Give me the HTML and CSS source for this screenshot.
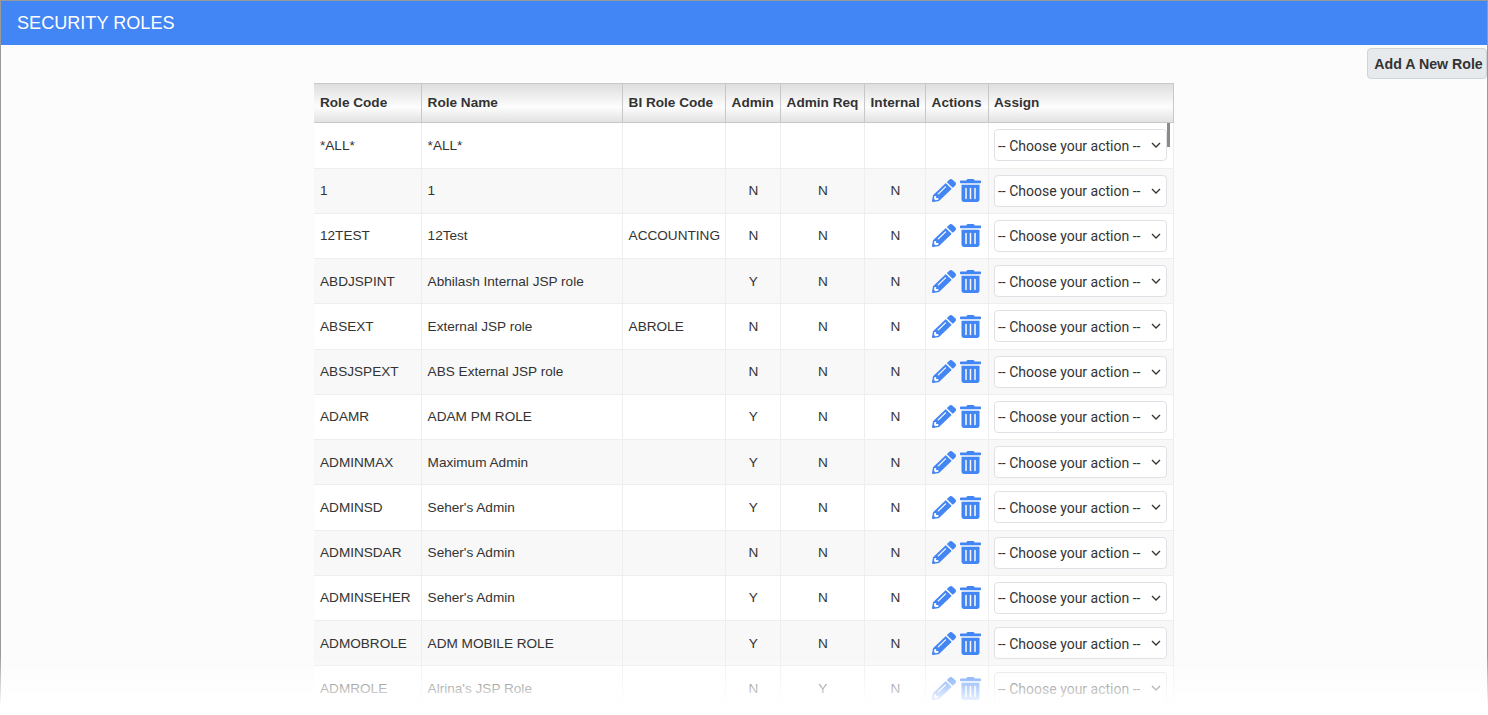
FILE: index.html
```html
<!DOCTYPE html>
<html lang="en">
<head>
    <meta charset="UTF-8">
    <title>Security Roles</title>
    <link rel="stylesheet" href="styles.css">
</head>
<body>
    <svg class="icon-defs" width="0" height="0">
        <symbol id="pencil" viewBox="0 0 512 512" preserveAspectRatio="none">
            <path d="M497.900 142.100l-46.100 46.100c-4.700 4.700-12.300 4.700-17 0l-111-111c-4.700-4.700-4.700-12.300 0-17l46.100-46.100c18.700-18.700 49.100-18.700 67.900 0l60.100 60.100c18.800 18.700 18.800 49.100 0 67.900zM284.200 99.800L21.600 362.400.4 483.900c-2.900 16.400 11.400 30.600 27.800 27.800l121.500-21.300 262.600-262.600c4.700-4.700 4.700-12.300 0-17l-111-111c-4.800-4.700-12.400-4.700-17.100 0zM124.100 339.900c-5.500-5.500-5.500-14.300 0-19.800l154-154c5.500-5.500 14.300-5.500 19.800 0s5.500 14.300 0 19.800l-154 154c-5.500 5.500-14.300 5.500-19.800 0zM88 424h48v36.300l-64.500 11.300-31.100-31.100L51.700 376H88v48z"/>
        </symbol>
        <symbol id="trash" viewBox="0 0 448 512" preserveAspectRatio="none">
            <path d="M32 464a48 48 0 0 0 48 48h288a48 48 0 0 0 48-48V128H32zm272-256a16 16 0 0 1 32 0v224a16 16 0 0 1-32 0zm-96 0a16 16 0 0 1 32 0v224a16 16 0 0 1-32 0zm-96 0a16 16 0 0 1 32 0v224a16 16 0 0 1-32 0zM432 32H312l-9.400-18.700A24 24 0 0 0 281.100 0H166.800a23.720 23.720 0 0 0-21.400 13.300L136 32H16A16 16 0 0 0 0 48v32a16 16 0 0 0 16 16h416a16 16 0 0 0 16-16V48a16 16 0 0 0-16-16z"/>
        </symbol>
    </svg>

    <div class="page">
        <div class="title-bar">SECURITY ROLES</div>
        <div class="toolbar">
            <button type="button" class="btn-add">Add A New Role</button>
        </div>

        <div class="table-wrap">
            <span class="scroll-thumb"></span>
            <table class="roles">
                <colgroup>
                    <col class="c-code"><col class="c-name"><col class="c-bi"><col class="c-admin">
                    <col class="c-req"><col class="c-int"><col class="c-act"><col class="c-assign">
                </colgroup>
                <thead>
                    <tr>
                        <th>Role Code</th>
                        <th>Role Name</th>
                        <th>BI Role Code</th>
                        <th>Admin</th>
                        <th>Admin Req</th>
                        <th>Internal</th>
                        <th>Actions</th>
                        <th>Assign</th>
                    </tr>
                </thead>
                <tbody>
                    <tr>
                        <td>*ALL*</td><td>*ALL*</td><td></td><td></td><td></td><td></td><td></td>
                        <td><select><option>-- Choose your action --</option></select></td>
                    </tr>
                    <tr>
                        <td>1</td><td>1</td><td></td><td class="mid">N</td><td class="mid">N</td><td class="mid">N</td>
                        <td class="actions"><svg class="ic-pencil"><use href="#pencil"/></svg><svg class="ic-trash"><use href="#trash"/></svg></td>
                        <td><select><option>-- Choose your action --</option></select></td>
                    </tr>
                    <tr>
                        <td>12TEST</td><td>12Test</td><td>ACCOUNTING</td><td class="mid">N</td><td class="mid">N</td><td class="mid">N</td>
                        <td class="actions"><svg class="ic-pencil"><use href="#pencil"/></svg><svg class="ic-trash"><use href="#trash"/></svg></td>
                        <td><select><option>-- Choose your action --</option></select></td>
                    </tr>
                    <tr>
                        <td>ABDJSPINT</td><td>Abhilash Internal JSP role</td><td></td><td class="mid">Y</td><td class="mid">N</td><td class="mid">N</td>
                        <td class="actions"><svg class="ic-pencil"><use href="#pencil"/></svg><svg class="ic-trash"><use href="#trash"/></svg></td>
                        <td><select><option>-- Choose your action --</option></select></td>
                    </tr>
                    <tr>
                        <td>ABSEXT</td><td>External JSP role</td><td>ABROLE</td><td class="mid">N</td><td class="mid">N</td><td class="mid">N</td>
                        <td class="actions"><svg class="ic-pencil"><use href="#pencil"/></svg><svg class="ic-trash"><use href="#trash"/></svg></td>
                        <td><select><option>-- Choose your action --</option></select></td>
                    </tr>
                    <tr>
                        <td>ABSJSPEXT</td><td>ABS External JSP role</td><td></td><td class="mid">N</td><td class="mid">N</td><td class="mid">N</td>
                        <td class="actions"><svg class="ic-pencil"><use href="#pencil"/></svg><svg class="ic-trash"><use href="#trash"/></svg></td>
                        <td><select><option>-- Choose your action --</option></select></td>
                    </tr>
                    <tr>
                        <td>ADAMR</td><td>ADAM PM ROLE</td><td></td><td class="mid">Y</td><td class="mid">N</td><td class="mid">N</td>
                        <td class="actions"><svg class="ic-pencil"><use href="#pencil"/></svg><svg class="ic-trash"><use href="#trash"/></svg></td>
                        <td><select><option>-- Choose your action --</option></select></td>
                    </tr>
                    <tr>
                        <td>ADMINMAX</td><td>Maximum Admin</td><td></td><td class="mid">Y</td><td class="mid">N</td><td class="mid">N</td>
                        <td class="actions"><svg class="ic-pencil"><use href="#pencil"/></svg><svg class="ic-trash"><use href="#trash"/></svg></td>
                        <td><select><option>-- Choose your action --</option></select></td>
                    </tr>
                    <tr>
                        <td>ADMINSD</td><td>Seher's Admin</td><td></td><td class="mid">Y</td><td class="mid">N</td><td class="mid">N</td>
                        <td class="actions"><svg class="ic-pencil"><use href="#pencil"/></svg><svg class="ic-trash"><use href="#trash"/></svg></td>
                        <td><select><option>-- Choose your action --</option></select></td>
                    </tr>
                    <tr>
                        <td>ADMINSDAR</td><td>Seher's Admin</td><td></td><td class="mid">N</td><td class="mid">N</td><td class="mid">N</td>
                        <td class="actions"><svg class="ic-pencil"><use href="#pencil"/></svg><svg class="ic-trash"><use href="#trash"/></svg></td>
                        <td><select><option>-- Choose your action --</option></select></td>
                    </tr>
                    <tr>
                        <td>ADMINSEHER</td><td>Seher's Admin</td><td></td><td class="mid">Y</td><td class="mid">N</td><td class="mid">N</td>
                        <td class="actions"><svg class="ic-pencil"><use href="#pencil"/></svg><svg class="ic-trash"><use href="#trash"/></svg></td>
                        <td><select><option>-- Choose your action --</option></select></td>
                    </tr>
                    <tr>
                        <td>ADMOBROLE</td><td>ADM MOBILE ROLE</td><td></td><td class="mid">Y</td><td class="mid">N</td><td class="mid">N</td>
                        <td class="actions"><svg class="ic-pencil"><use href="#pencil"/></svg><svg class="ic-trash"><use href="#trash"/></svg></td>
                        <td><select><option>-- Choose your action --</option></select></td>
                    </tr>
                    <tr>
                        <td>ADMROLE</td><td>Alrina's JSP Role</td><td></td><td class="mid">N</td><td class="mid">Y</td><td class="mid">N</td>
                        <td class="actions"><svg class="ic-pencil"><use href="#pencil"/></svg><svg class="ic-trash"><use href="#trash"/></svg></td>
                        <td><select><option>-- Choose your action --</option></select></td>
                    </tr>
                </tbody>
            </table>
        </div>
    </div>

    <div class="fade"></div>
</body>
</html>
```

FILE: styles.css
```css
* {
    box-sizing: border-box;
}

html,
body {
    margin: 0;
    height: 100%;
    overflow: hidden;
}

body {
    font-family: "Liberation Sans", Arial, sans-serif;
    font-size: 13.6px;
    color: #333;
    background-color: #fcfcfc;
}

.icon-defs {
    position: absolute;
}

.page {
    height: 715px;
    border: 1px solid #999;
    border-bottom: none;
    overflow: hidden;
}

.title-bar {
    height: 44px;
    padding-left: 16px;
    line-height: 44px;
    font-size: 18.1px;
    color: #fff;
    background-color: #4285f4;
}

.toolbar {
    display: flex;
    justify-content: flex-end;
    height: 38px;
    padding-top: 3px;
}

.btn-add {
    width: 120px;
    height: 31px;
    padding: 0 0 0 3px;
    font-family: "Liberation Sans", Arial, sans-serif;
    font-size: 14.2px;
    font-weight: bold;
    color: #333;
    background-color: #e7eaed;
    border: 1px solid #ced4da;
    border-radius: 4px;
}

.table-wrap {
    position: relative;
    width: 860px;
    margin: 0 auto;
}

.scroll-thumb {
    position: absolute;
    left: 853px;
    top: 40px;
    width: 3px;
    height: 24px;
    background-color: #8a8a8a;
}

.roles {
    width: 860px;
    table-layout: fixed;
    border-collapse: separate;
    border-spacing: 0;
}

.c-code { width: 108px; }
.c-name { width: 201px; }
.c-bi { width: 103px; }
.c-admin { width: 55px; }
.c-req { width: 84px; }
.c-int { width: 61px; }
.c-act { width: 63px; }
.c-assign { width: 185px; }

.roles th {
    height: 40.3px;
    padding: 0 5px 2px 5.6px;
    text-align: left;
    font-weight: bold;
    white-space: nowrap;
    border-top: 1px solid #c8c8c8;
    border-bottom: 1px solid #c8c8c8;
    border-right: 1px solid #c8c8c8;
    background: linear-gradient(#dedede, #fdfdfd 60%, #e2e2e2);
}

.roles td {
    height: 45.25px;
    padding: 0 5px 0 5.6px;
    white-space: nowrap;
    border-bottom: 1px solid #eee;
    border-right: 1px solid #eee;
}

.roles th:first-child,
.roles td:first-child {
    padding-left: 6px;
}

.roles th:last-child,
.roles td:last-child {
    padding-left: 5px;
}

.roles tbody tr:nth-child(odd) {
    background-color: #fff;
}

.roles tbody tr:nth-child(even) {
    background-color: #f8f8f8;
}

.roles td.mid {
    text-align: center;
}

.roles td.actions {
    padding: 0 0 0 6px;
    font-size: 0;
}

.ic-pencil,
.ic-trash {
    vertical-align: middle;
    fill: #4285f4;
}

.ic-pencil {
    width: 24px;
    height: 23px;
}

.ic-trash {
    width: 21px;
    height: 23px;
    margin-left: 4px;
}

.roles select {
    appearance: none;
    width: 173px;
    height: 32px;
    padding: 1px 3px 0;
    font-family: Roboto, sans-serif;
    font-size: 14px;
    color: #333;
    background-color: #fff;
    background-image: url("data:image/svg+xml,%3Csvg xmlns='http://www.w3.org/2000/svg' width='10' height='6'%3E%3Cpath d='M1 1l4 4 4-4' fill='none' stroke='%23333' stroke-width='1.3'/%3E%3C/svg%3E");
    background-repeat: no-repeat;
    background-position: right 5px center;
    border: 1px solid #dee2e6;
    border-radius: 4px;
    vertical-align: middle;
}

.fade {
    position: fixed;
    left: 0;
    right: 0;
    bottom: 0;
    height: 60px;
    background: linear-gradient(rgba(255, 255, 255, 0), #fff 85%);
}
```
